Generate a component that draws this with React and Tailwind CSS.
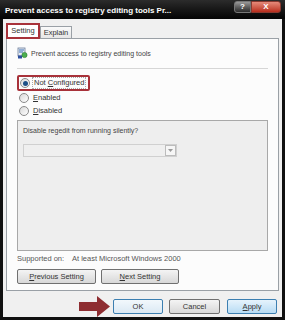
import React from 'react';

const font = { fontFamily: '"Liberation Sans", Arial, sans-serif' };

const Radio = ({ checked }) => (
  <span className="w-[10px] h-[10px] rounded-full border border-[#8a8a8a] bg-gradient-to-br from-[#d8d8d8] to-[#ffffff] flex items-center justify-center shrink-0">
    {checked && <span className="w-[5px] h-[5px] rounded-full bg-[#1d4f86]" />}
  </span>
);

const Btn = ({ children, className = '' }) => (
  <div
    className={`h-[15px] flex items-center justify-center rounded-[2px] border border-[#707070] bg-gradient-to-b from-[#f4f4f4] to-[#d8d8d8] text-[7.5px] text-[#333] whitespace-nowrap leading-none ${className}`}
  >
    {children}
  </div>
);

const PolicyIcon = () => (
  <svg width="11" height="12" viewBox="0 0 11 12">
    <rect x="1" y="1" width="7" height="8" fill="#e8eef6" stroke="#6b7c99" strokeWidth="0.8" />
    <rect x="2" y="2.5" width="5" height="1" fill="#3b6fb4" />
    <rect x="2" y="4.5" width="4" height="1" fill="#3b6fb4" />
    <circle cx="7.5" cy="8" r="2.6" fill="#4caf50" stroke="#2e7d32" strokeWidth="0.6" />
    <rect x="1" y="8.5" width="4" height="3" fill="#2c4f9e" />
  </svg>
);

export default function App() {
  return (
    <div className="w-[285px] h-[320px] bg-[#101010] px-[3px] pb-[3px] flex flex-col overflow-hidden leading-none" style={font}>
      {/* Title bar */}
      <div className="h-[19px] flex items-center justify-between bg-gradient-to-b from-[#2c2c2c] to-[#050505] -mx-[3px] pl-[5px] pr-[4px] shrink-0">
        <span className="text-[8px] font-bold text-white whitespace-nowrap mt-[3px]">
          Prevent access to registry editing tools Pr...
        </span>
        <div className="flex self-start mt-[1px]">
          <div className="w-[17px] h-[12px] rounded-l-[3px] border border-[#777] bg-gradient-to-b from-[#9a9a9a] to-[#2a2a2a] flex items-center justify-center text-white text-[8px] font-bold">
            ?
          </div>
          <div className="w-[30px] h-[12px] rounded-r-[3px] border border-[#8a3a30] bg-gradient-to-b from-[#e58a7a] to-[#b82a1a] flex items-center justify-center text-white text-[8px] font-bold">
            X
          </div>
        </div>
      </div>

      {/* Body */}
      <div className="flex-1 bg-[#f0f0f0] px-[3px] pt-[4px] flex flex-col">
        {/* Tabs */}
        <div className="flex items-end h-[15px] relative z-10">
          <div className="w-[34px] h-[16px] border-2 border-[#a8323a] bg-white flex items-center justify-center text-[7.5px] text-[#333] -mb-[1px]">
            Setting
          </div>
          <div className="w-[32px] h-[12px] border border-b-0 border-[#9aa0a6] bg-gradient-to-b from-[#fafafa] to-[#e6e6e6] flex items-center justify-center text-[7.5px] text-[#333]">
            Explain
          </div>
        </div>

        {/* Panel */}
        <div className="h-[253px] border border-[#9aa0a6] bg-[#fcfcfc] px-[10px] flex flex-col">
          <div className="mt-[8px] h-[12px] flex items-center gap-[3px]">
            <PolicyIcon />
            <span className="text-[7px] text-[#444] whitespace-nowrap">Prevent access to registry editing tools</span>
          </div>
          <div className="mt-[9px] h-px bg-[#d6d6d6]" />

          <div className="mt-[6px] w-fit h-[16px] border-2 border-[#a8323a] rounded-[2px] flex items-center gap-[2px] pl-[1px] pr-[2px]">
            <Radio checked />
            <span className="text-[7.5px] text-[#333] whitespace-nowrap border border-dotted border-[#aaa] px-[1px] py-[1px]">
              Not <span className="underline">C</span>onfigured
            </span>
          </div>
          <div className="h-[13px] flex items-center gap-[4px] pl-[2px]">
            <Radio />
            <span className="text-[7.5px] text-[#333] whitespace-nowrap"><span className="underline">E</span>nabled</span>
          </div>
          <div className="h-[13px] flex items-center gap-[4px] pl-[2px]">
            <Radio />
            <span className="text-[7.5px] text-[#333] whitespace-nowrap"><span className="underline">D</span>isabled</span>
          </div>

          <div className="mt-[3px] h-[131px] border border-[#a8a8a8] bg-[#eeeeee] px-[5px] flex flex-col">
            <div className="mt-[3px] h-[12px] flex items-center text-[7px] text-[#444] whitespace-nowrap">
              Disable regedit from running silently?
            </div>
            <div className="mt-[8px] w-[154px] h-[13px] border border-[#d0d0d0] bg-[#efefef] flex justify-end">
              <div className="w-[11px] h-[11px] border border-[#bcbcbc] bg-[#f6f6f6] flex items-center justify-center">
                <svg width="5" height="3" viewBox="0 0 5 3">
                  <path d="M0 0 L5 0 L2.5 3 Z" fill="#9a9a9a" />
                </svg>
              </div>
            </div>
          </div>

          <div className="mt-[3px] h-[10px] flex items-center text-[7.5px] text-[#555] whitespace-nowrap">
            <span className="w-[55px]">Supported on:</span>
            <span>At least Microsoft Windows 2000</span>
          </div>

          <div className="mt-[5px] flex gap-[5px]">
            <Btn className="w-[79px]"><span><span className="underline">P</span>revious Setting</span></Btn>
            <Btn className="w-[78px]"><span><span className="underline">N</span>ext Setting</span></Btn>
          </div>
        </div>

        {/* Bottom row */}
        <div className="mt-[5px] flex items-center justify-end pr-[2px]">
          <svg width="31" height="21" viewBox="0 0 31 21" className="mr-[3px]">
            <path d="M0 6 L18 6 L18 0 L31 10.5 L18 21 L18 15 L0 15 Z" fill="#8e2d31" />
          </svg>
          <Btn className="w-[50px] !border-[#3c7fb1] !from-[#f2f8fc] !to-[#dbe9f4]">OK</Btn>
          <Btn className="w-[51px] ml-[6px]">Cancel</Btn>
          <Btn className="w-[50px] ml-[7px] !border-[#3c7fb1] !from-[#e6f3fc] !to-[#b8dcf4]"><span><span className="underline">A</span>pply</span></Btn>
        </div>
      </div>
    </div>
  );
}
